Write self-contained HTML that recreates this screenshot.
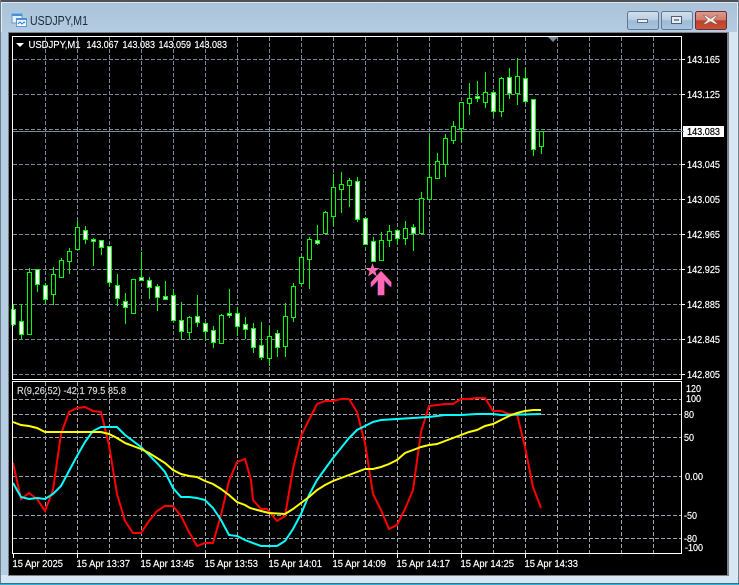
<!DOCTYPE html>
<html><head><meta charset="utf-8"><style>
html,body{margin:0;padding:0;background:#fff;width:739px;height:585px;overflow:hidden}
svg{display:block;position:absolute;left:0;top:0}
text{font-family:"Liberation Sans",sans-serif;font-size:10.5px;fill:#fff;stroke:#fff;stroke-width:.18px}
</style></head><body>
<svg width="739" height="585" viewBox="0 0 739 585" xmlns="http://www.w3.org/2000/svg">
<defs>
<linearGradient id="tb" x1="0" y1="0" x2="0" y2="1"><stop offset="0" stop-color="#a9c3da"/><stop offset="1" stop-color="#b4cbe0"/></linearGradient>
<linearGradient id="bb" x1="0" y1="0" x2="0" y2="1"><stop offset="0" stop-color="#d3e0ec"/><stop offset=".48" stop-color="#b9cde0"/><stop offset=".5" stop-color="#9dbad6"/><stop offset="1" stop-color="#a9c5df"/></linearGradient>
<linearGradient id="cb" x1="0" y1="0" x2="0" y2="1"><stop offset="0" stop-color="#dd9c90"/><stop offset=".48" stop-color="#d0796a"/><stop offset=".5" stop-color="#bb3f28"/><stop offset="1" stop-color="#c9523c"/></linearGradient>
</defs>
<!-- window frame -->
<rect width="739" height="585" fill="#b9cfe3"/>
<rect x="0" y="0" width="739" height="32" fill="url(#tb)"/>
<rect x="0" y="0" width="739" height="2" fill="#4f5154"/>
<rect x="1" y="2" width="737" height="1" fill="#dbe6f0"/>
<rect x="0" y="0" width="1" height="585" fill="#6d7e8c"/>
<rect x="738" y="0" width="1" height="585" fill="#6d7e8c"/>
<rect x="1" y="3" width="1" height="580" fill="#e4eef6"/>
<rect x="737" y="3" width="1" height="580" fill="#e4eef6"/>
<rect x="1" y="32" width="7" height="543" fill="#b7cde2"/>
<rect x="728" y="32" width="9" height="543" fill="#d8e6f2"/>
<rect x="1" y="575" width="737" height="8" fill="#d6e6f4"/>
<rect x="8" y="575" width="721" height="1" fill="#fff"/>
<rect x="0" y="583" width="739" height="1" fill="#3f6f86"/>
<rect x="0" y="584" width="739" height="1" fill="#27b4d6"/>
<!-- client -->
<rect x="8" y="32" width="721" height="544" fill="#7a8087"/>
<rect x="9" y="33" width="718" height="542" fill="#000"/>
<!-- title -->
<g>
<rect x="12" y="14" width="10" height="9" fill="#e6f0fa" stroke="#5b9bd8"/>
<rect x="12" y="14" width="10" height="2" fill="#4a90d8"/>
<rect x="16.500" y="18.500" width="10" height="8" fill="#f2f7fc" stroke="#5b9bd8"/>
<rect x="16" y="18" width="11" height="2" fill="#4a90d8"/>
<path d="M18 24l2-2 2 2 2-2 1 1" fill="none" stroke="#3c7fc4"/>
</g>
<text x="30" y="25" textLength="58" lengthAdjust="spacingAndGlyphs" style="font-size:12.500px;fill:#1c2a38;stroke:none">USDJPY,M1</text>
<!-- buttons -->
<rect x="627.500" y="11.500" width="31" height="18" rx="2" fill="url(#bb)" stroke="#5f7896"/>
<rect x="637.500" y="19.500" width="10" height="3" fill="#eef2f6" stroke="#5e6f82"/>
<rect x="661.500" y="11.500" width="31" height="18" rx="2" fill="url(#bb)" stroke="#5f7896"/>
<rect x="671.500" y="16.500" width="10" height="7" fill="#e8edf2" stroke="#4f6074"/>
<rect x="674" y="19" width="5" height="2" fill="#7d90a6"/>
<rect x="695.500" y="11.500" width="31" height="18" rx="2" fill="url(#cb)" stroke="#6d2b33"/>
<path d="M706 15.500l4.500 3 .5 0 4.500-3h2l-4 4.500 4.500 4h-3l-4.500-2.500-4.500 2.500h-3l4.500-4-4-4.500z" fill="#f1ece8" stroke="#8c5a55" stroke-width=".6"/>
<!-- grid main -->
<g stroke="#778899" stroke-width="1" stroke-dasharray="4 2" fill="none" shape-rendering="crispEdges">
<path d="M13 59.500H681M13 94.500H681M13 129.500H681M13 164.500H681M13 199.500H681M13 234.500H681M13 269.500H681M13 304.500H681M13 339.500H681M13 374.500H681"/>
<path d="M45.500 37V379M77.500 37V379M109.500 37V379M141.500 37V379M173.500 37V379M205.500 37V379M237.500 37V379M269.500 37V379M301.500 37V379M333.500 37V379M365.500 37V379M397.500 37V379M429.500 37V379M461.500 37V379M493.500 37V379M525.500 37V379M557.500 37V379M589.500 37V379M621.500 37V379M653.500 37V379"/>
</g>
<!-- grid sub -->
<g stroke="#9aa5b0" stroke-width="1" stroke-dasharray="4 2" fill="none" shape-rendering="crispEdges">
<path d="M13 399.500H681M13 414.500H681M13 437.500H681M13 476.500H681M13 515.500H681M13 538.500H681"/>
<path d="M45.500 382V554M77.500 382V554M109.500 382V554M141.500 382V554M173.500 382V554M205.500 382V554M237.500 382V554M269.500 382V554M301.500 382V554M333.500 382V554M365.500 382V554M397.500 382V554M429.500 382V554M461.500 382V554M493.500 382V554M525.500 382V554M557.500 382V554M589.500 382V554M621.500 382V554M653.500 382V554"/>
</g>
<!-- price line -->
<path d="M13 131.500H682" stroke="#778899" shape-rendering="crispEdges"/>
<!-- wicks -->
<path shape-rendering="crispEdges" stroke="#00ff00" fill="none" d="M13.500 304V326M21.500 304V339M29.500 268V335M37.500 269V292M45.500 283V304M53.500 267V305M61.500 258V278M69.500 248V274M77.500 221V250M85.500 226V244M93.500 238V266M101.500 240V255M109.500 246V287M117.500 274V306M125.500 293V324M133.500 279V314M141.500 252V281M149.500 277V299M157.500 284V311M165.500 281V300M173.500 289V321M181.500 302V339M189.500 316V339M197.500 295V327M205.500 323V341M213.500 326V348M221.500 314V344M229.500 289V318M237.500 307V336M245.500 317V339M253.500 323V353M261.500 322V360M269.500 327V366M277.500 330V357M285.500 303V357M293.500 283V322M301.500 256V286M309.500 237V289M317.500 225V245M325.500 211V234M333.500 174V226M341.500 172V213M349.500 178V207M357.500 177V222M365.500 217V245M373.500 237V262M381.500 232V261M389.500 225V247M397.500 229V244M405.500 221V245M413.500 224V251M421.500 192V234M429.500 136V200M437.500 153V179M445.500 134V177M453.500 121V144M461.500 102V142M469.500 83V115M477.500 81V102M485.500 72V108M493.500 90V117M501.500 77V117M509.500 68V99M517.500 58V105M525.500 68V103M533.500 99V156M541.500 131V154"/>
<!-- hollow bodies -->
<path shape-rendering="crispEdges" stroke="#00ff00" fill="#000" d="M27.500 272.500h4V334.500h-4zM51.500 274.500h4V294.500h-4zM59.500 260.500h4V277.500h-4zM67.500 251.500h4V261.500h-4zM75.500 227.500h4V249.500h-4zM131.500 279.500h4V313.500h-4zM187.500 317.500h4V332.500h-4zM219.500 315.500h4V343.500h-4zM267.500 336.500h4V358.500h-4zM283.500 316.500h4V346.500h-4zM291.500 286.500h4V317.500h-4zM299.500 257.500h4V283.500h-4zM307.500 239.500h4V259.500h-4zM323.500 212.500h4V233.500h-4zM331.500 187.500h4V216.500h-4zM339.500 184.500h4V189.500h-4zM347.500 180.500h4V185.500h-4zM379.500 240.500h4V260.500h-4zM387.500 231.500h4V240.500h-4zM403.500 228.500h4V238.500h-4zM419.500 198.500h4V233.500h-4zM427.500 177.500h4V199.500h-4zM435.500 161.500h4V178.500h-4zM443.500 138.500h4V164.500h-4zM451.500 126.500h4V140.500h-4zM459.500 102.500h4V128.500h-4zM467.500 98.500h4V103.500h-4zM483.500 92.500h4V102.500h-4zM499.500 78.500h4V111.500h-4zM515.500 76.500h4V93.500h-4zM539.500 131.500h4V146.500h-4z"/>
<!-- white bodies -->
<path shape-rendering="crispEdges" stroke="#00ff00" fill="#fff" d="M11.500 309.500h4V324.500h-4zM19.500 321.500h4V334.500h-4zM35.500 269.500h4V284.500h-4zM43.500 285.500h4V299.500h-4zM83.500 230.500h4V239.500h-4zM91.500 239.500h4V241.500h-4zM99.500 240.500h4V247.500h-4zM107.500 246.500h4V282.500h-4zM115.500 285.500h4V298.500h-4zM123.500 301.500h4V307.500h-4zM139.500 277.500h4V280.500h-4zM147.500 280.500h4V287.500h-4zM155.500 286.500h4V297.500h-4zM163.500 296.500h4V299.500h-4zM171.500 295.500h4V320.500h-4zM179.500 320.500h4V331.500h-4zM195.500 316.500h4V322.500h-4zM203.500 323.500h4V331.500h-4zM211.500 330.500h4V342.500h-4zM227.500 313.500h4V315.500h-4zM235.500 313.500h4V326.500h-4zM243.500 324.500h4V329.500h-4zM251.500 328.500h4V347.500h-4zM259.500 345.500h4V357.500h-4zM275.500 333.500h4V347.500h-4zM315.500 240.500h4V243.500h-4zM355.500 181.500h4V219.500h-4zM363.500 218.500h4V244.500h-4zM371.500 241.500h4V261.500h-4zM395.500 230.500h4V238.500h-4zM411.500 227.500h4V233.500h-4zM475.500 96.500h4V98.500h-4zM491.500 92.500h4V111.500h-4zM507.500 77.500h4V93.500h-4zM523.500 78.500h4V101.500h-4zM531.500 99.500h4V149.500h-4z"/>
<!-- arrow + star -->
<polygon points="381,271 391,282 391,287 384,280 384,295 378,295 378,280 371,287 371,282" fill="#3c3cc8" transform="translate(-.6 .6)"/>
<polygon points="381,271 391,282 391,287 384,280 384,295 378,295 378,280 371,287 371,282" fill="#c02848" transform="translate(.7 .3)"/>
<polygon points="381,271 391,282 391,287 384,280 384,295 378,295 378,280 371,287 371,282" fill="#ff69b4"/>
<polygon points="372.500,263 374.200,268 379.600,268 375.300,271.200 376.900,276.500 372.500,273.300 368.100,276.500 369.700,271.200 365.400,268 370.800,268" fill="#ff69b4"/>
<!-- top marker, triangle -->
<polygon points="548,37 558,37 553,42" fill="#778899"/>
<polygon points="16,43 24,43 20,47" fill="#fff"/>
<!-- indicator lines -->
<polyline fill="none" stroke="#ff0000" stroke-width="2" points="13,463 21,499 29,493 37,499 45,511 53,490 61,434 69,412 77,408 85,407 93,411 101,412 109,445 117,494 125,521 133,533 141,533 149,521 157,511 165,506 173,506 181,516 189,532 197,546 205,543 213,543 221,515 229,481 237,462 245,459 251,480 253,500 261,509 267,509 277,521 285,516 293,469 301,436 309,420 317,404 325,401 333,401 341,399 349,399 357,412 365,443 373,494 381,510 389,529 397,525 405,509 413,490 421,432 429,406 437,405 445,404 453,404 461,399 469,399 477,398 485,398 493,411 501,411 509,414 517,414 525,447 533,487 541,508"/>
<polyline fill="none" stroke="#00ffff" stroke-width="2" points="13,483 21,497 29,499 37,498 45,499 53,494 61,486 69,471 77,456 85,442 93,431 101,427 109,427 117,427 125,435 133,441 141,447 149,455 157,463 165,472 173,488 181,497 189,497 197,498 205,500 213,508 221,520 229,535 237,536 245,540 250,542 261,546 277,546 285,541 293,529 301,514 309,495 317,480 325,469 333,458 341,448 349,438 357,430 365,426 373,422 381,420 397,419 413,418 429,417 445,415 461,415 477,414 493,414 501,415 541,414"/>
<polyline fill="none" stroke="#ffff00" stroke-width="2" points="13,422 21,425 29,426 37,428 45,432 61,432 101,432 109,434 117,438 125,443 133,446 141,449 149,453 157,458 165,463 173,470 181,474 189,476 197,477 205,481 213,484 221,489 229,495 237,502 245,505 250,508 261,511 269,513 285,514 293,509 301,503 309,497 317,490 325,485 333,481 341,478 349,475 357,472 365,469 373,469 381,467 389,464 397,460 405,453 413,450 421,447 429,445 437,444 445,441 453,438 461,435 469,432 477,430 485,426 493,424 501,420 509,416 517,413 525,411 533,410 541,410"/>
<!-- frames -->
<g fill="none" stroke="#fff" shape-rendering="crispEdges">
<rect x="12.500" y="36.500" width="669" height="343"/>
<rect x="12.500" y="381.500" width="669" height="172"/>
</g>
<!-- ticks -->
<path stroke="#fff" shape-rendering="crispEdges" d="M682 59.500h3M682 94.500h3M682 164.500h3M682 199.500h3M682 234.500h3M682 269.500h3M682 304.500h3M682 339.500h3M682 374.500h3M13.500 554v4M77.500 554v4M141.500 554v4M205.500 554v4M269.500 554v4M333.500 554v4M397.500 554v4M461.500 554v4M525.500 554v4"/>
<!-- price label -->
<rect x="683" y="126" width="41" height="11" fill="#fff"/>
<path stroke="#778899" d="M681 131.500h3" shape-rendering="crispEdges"/>
<text x="687" y="135" textLength="33" lengthAdjust="spacingAndGlyphs" style="fill:#000;stroke:#000">143.083</text>
<!-- header -->
<text x="28.500" y="48" textLength="52" lengthAdjust="spacingAndGlyphs">USDJPY,M1</text>
<text x="86.500" y="48" textLength="32" lengthAdjust="spacingAndGlyphs">143.067</text>
<text x="122.500" y="48" textLength="32.500" lengthAdjust="spacingAndGlyphs">143.083</text>
<text x="158.500" y="48" textLength="32.500" lengthAdjust="spacingAndGlyphs">143.059</text>
<text x="194.500" y="48" textLength="32.500" lengthAdjust="spacingAndGlyphs">143.083</text>
<!-- price axis -->
<text x="687" y="63" textLength="33" lengthAdjust="spacingAndGlyphs">143.165</text>
<text x="687" y="98" textLength="33" lengthAdjust="spacingAndGlyphs">143.125</text>
<text x="687" y="168" textLength="33" lengthAdjust="spacingAndGlyphs">143.045</text>
<text x="687" y="203" textLength="33" lengthAdjust="spacingAndGlyphs">143.005</text>
<text x="687" y="238" textLength="33" lengthAdjust="spacingAndGlyphs">142.965</text>
<text x="687" y="273" textLength="33" lengthAdjust="spacingAndGlyphs">142.925</text>
<text x="687" y="308" textLength="33" lengthAdjust="spacingAndGlyphs">142.885</text>
<text x="687" y="343" textLength="33" lengthAdjust="spacingAndGlyphs">142.845</text>
<text x="687" y="378" textLength="33" lengthAdjust="spacingAndGlyphs">142.805</text>
<!-- indicator label -->
<text x="17" y="394" textLength="109" lengthAdjust="spacingAndGlyphs" style="fill:#d8d8d8;stroke:#d8d8d8">R(9,26,52) -42.1 79.5 85.8</text>
<!-- sub axis -->
<text x="686" y="392" textLength="15" lengthAdjust="spacingAndGlyphs">120</text>
<text x="686" y="402" textLength="15" lengthAdjust="spacingAndGlyphs">100</text>
<text x="684" y="418" textLength="10" lengthAdjust="spacingAndGlyphs">80</text>
<text x="684" y="441" textLength="10" lengthAdjust="spacingAndGlyphs">50</text>
<text x="685" y="480" textLength="18" lengthAdjust="spacingAndGlyphs">0.00</text>
<text x="684" y="519" textLength="13" lengthAdjust="spacingAndGlyphs">-50</text>
<text x="684" y="542" textLength="13" lengthAdjust="spacingAndGlyphs">-80</text>
<text x="685" y="551" textLength="18" lengthAdjust="spacingAndGlyphs">-100</text>
<!-- time axis -->
<text x="12.500" y="567" textLength="50.500" lengthAdjust="spacingAndGlyphs">15 Apr 2025</text>
<text x="76.500" y="567" textLength="53.500" lengthAdjust="spacingAndGlyphs">15 Apr 13:37</text>
<text x="140.500" y="567" textLength="53.500" lengthAdjust="spacingAndGlyphs">15 Apr 13:45</text>
<text x="204.500" y="567" textLength="53.500" lengthAdjust="spacingAndGlyphs">15 Apr 13:53</text>
<text x="268.500" y="567" textLength="53.500" lengthAdjust="spacingAndGlyphs">15 Apr 14:01</text>
<text x="332.500" y="567" textLength="53.500" lengthAdjust="spacingAndGlyphs">15 Apr 14:09</text>
<text x="396.500" y="567" textLength="53.500" lengthAdjust="spacingAndGlyphs">15 Apr 14:17</text>
<text x="460.500" y="567" textLength="53.500" lengthAdjust="spacingAndGlyphs">15 Apr 14:25</text>
<text x="524.500" y="567" textLength="53.500" lengthAdjust="spacingAndGlyphs">15 Apr 14:33</text>
</svg>
</body></html>
